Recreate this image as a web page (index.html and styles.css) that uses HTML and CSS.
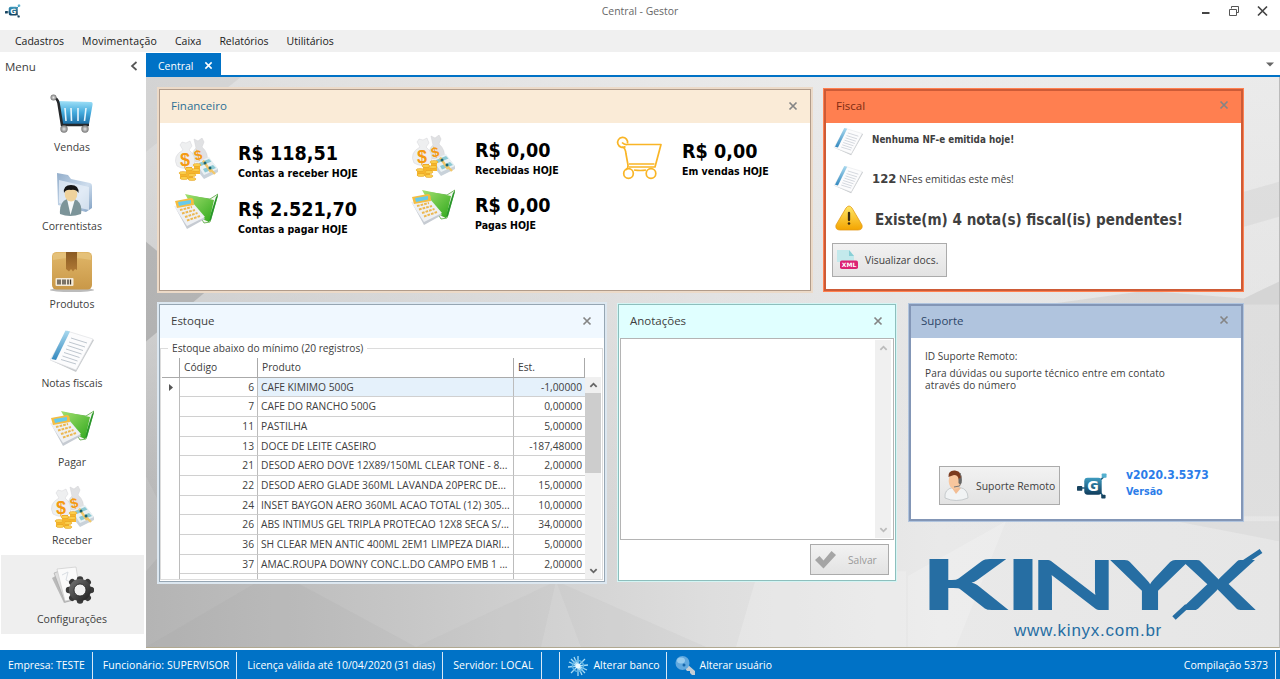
FILE: index.html
```html
<!DOCTYPE html>
<html lang="pt-BR">
<head>
<meta charset="utf-8">
<title>Central - Gestor</title>
<link rel="stylesheet" href="styles.css">
</head>
<body>
<svg class="defs" width="0" height="0">
  <defs>
    <linearGradient id="gBlue" x1="0" y1="0" x2="0" y2="1"><stop offset="0" stop-color="#9fe0f7"/><stop offset=".5" stop-color="#45abdd"/><stop offset="1" stop-color="#1c6ea6"/></linearGradient>
    <linearGradient id="gBox" x1="0" y1="0" x2="0" y2="1"><stop offset="0" stop-color="#e0b668"/><stop offset="1" stop-color="#c99848"/></linearGradient>
    <linearGradient id="gTape" x1="0" y1="0" x2="0" y2="1"><stop offset="0" stop-color="#8a5a22"/><stop offset="1" stop-color="#b07a35"/></linearGradient>
    <linearGradient id="gGreen" x1="0" y1="0" x2="1" y2="1"><stop offset="0" stop-color="#a4e070"/><stop offset="1" stop-color="#2fa81c"/></linearGradient>
    <linearGradient id="gFolder" x1="0" y1="0" x2="1" y2="1"><stop offset="0" stop-color="#93aecb"/><stop offset=".6" stop-color="#cfdeee"/><stop offset="1" stop-color="#7f9fc2"/></linearGradient>
    <linearGradient id="gWarn" x1="0" y1="0" x2="0" y2="1"><stop offset="0" stop-color="#ffe766"/><stop offset="1" stop-color="#f4a400"/></linearGradient>
    <linearGradient id="gGear" x1="0" y1="0" x2="1" y2="1"><stop offset="0" stop-color="#777"/><stop offset="1" stop-color="#1c1c1c"/></linearGradient>
    <linearGradient id="gLogo" x1="0" y1="0" x2="0" y2="1"><stop offset="0" stop-color="#3f9cc0"/><stop offset="1" stop-color="#0f3c5c"/></linearGradient>
    <radialGradient id="gBall"><stop offset="0" stop-color="#e8e8e8"/><stop offset="1" stop-color="#777"/></radialGradient>
    <linearGradient id="gSpine" x1="0" y1="0" x2="0" y2="1"><stop offset="0" stop-color="#a9d9ef"/><stop offset="1" stop-color="#3489bf"/></linearGradient>

    <symbol id="i-cart" viewBox="0 0 44 44">
      <path d="M8 8L41 9Q43 9 42.500 12L39 31H12Z" fill="url(#gBlue)"/>
      <path d="M15 15L16 28M21 15L21.500 28M28 15L28 28M36 15L34.500 28" stroke="#e6f6fd" stroke-width="1.600"/>
      <path d="M3 4.500Q7.500 5 8.500 10L12 32H39" fill="none" stroke="#26282b" stroke-width="2.600"/>
      <circle cx="3.500" cy="4.500" r="3" fill="url(#gBall)"/><circle cx="14" cy="36" r="3.700" fill="url(#gBall)"/><circle cx="35" cy="36" r="3.700" fill="url(#gBall)"/>
    </symbol>
    <symbol id="i-people" viewBox="0 0 44 44">
      <path d="M7 1L18 3 21 7 40 11Q42 11.500 42 14V36L36 40 8 33Z" fill="url(#gFolder)"/>
      <path d="M9 8L39 15V38L9 31Z" fill="#e7eff8" opacity=".75"/>
      <path d="M10 42Q9 30 17 27H24Q33 30 31 42Q20 46 10 42Z" fill="#7c9499"/>
      <path d="M17 27L20.500 43 25 27Z" fill="#f6f9fa"/>
      <ellipse cx="21" cy="22" rx="6.300" ry="7.500" fill="#efd29c"/>
      <path d="M14 21Q13 13 21 13T28.500 21Q26 17 21 18Q16 17 14 21Z" fill="#161616"/>
    </symbol>
    <symbol id="i-box" viewBox="0 0 44 44">
      <ellipse cx="22" cy="40" rx="22" ry="2" fill="#bcbcbc"/>
      <rect x="2" y="2" width="40" height="37.500" rx="4.500" fill="url(#gBox)"/>
      <path d="M3 10Q22 6 41 10V5Q40 3 37 3H7Q4 3 3 5Z" fill="#eac987" opacity=".6"/>
      <path d="M16 2H27V20L25 19 23 21.500 21 19 19 21.500 16 19Z" fill="url(#gTape)"/>
      <rect x="5.500" y="28" width="18" height="8" rx="1" fill="#f4ead8"/>
      <path d="M8 29.500V34.500M10 29.500V34.500M13 29.500V34.500M15 29.500V34.500M18 29.500V34.500M20.500 29.500V34.500" stroke="#3b342c" stroke-width="1.300"/>
    </symbol>
    <symbol id="i-note" viewBox="0 0 44 44">
      <path d="M0 31L26 43 44 11 42 10 26 39Z" fill="#c6c9cc"/>
      <path d="M17 2L43 10 26 41 0 31Z" fill="#fcfcfd" stroke="#dcdee0" stroke-width=".6"/>
      <path d="M15.500 1.500L20 2.500 6 31 1.500 30Z" fill="url(#gSpine)"/>
      <path d="M21 9L37 14M19 13L35 18M17.500 16.500L33 21.500M16 20L31.500 25M14 23.500L29.500 28.500M12.500 27L27.500 32M11 30.500L26 35" stroke="#b7bfc8" stroke-width=".9"/>
    </symbol>
    <symbol id="i-pay" viewBox="0 0 44 40">
      <path d="M14 3L36 6 44 1 36 29 30 30Z" fill="#f3f6ef" stroke="#53a43b" stroke-width=".8"/>
      <path d="M42 4L44 2 37 27 34 29Z" fill="#27962a"/>
      <path d="M11 1L40 7 35 29 24 24Z" fill="url(#gGreen)"/>
      <path d="M1 14L18 11 31 26 13 36Z" fill="#c6cbd2"/>
      <path d="M0 13L19 10 31 24 13 33Z" fill="#eef0f3"/>
      <path d="M1 8L17 5Q19 5 19.500 7L20 12 3 15Z" fill="#f4bd41"/>
      <path d="M4 9L17 7V10.500L5 13Z" fill="#67caea"/>
      <path d="M6 17L18 14M8 20.500L21 17M11 24L23.500 20M13 27.500L26 23" stroke="#ecb750" stroke-width="2" stroke-dasharray="2.700 1"/>
    </symbol>
    <symbol id="i-money" viewBox="0 0 44 44">
      <path d="M20 1L24 3 28 0 30 4 28 9Q35 15 33 24H18Q17 14 22 10Z" fill="#e0e1e3" stroke="#d0d1d4" stroke-width=".5"/>
      <path d="M8 4L12 5 16 3 18 8 15 12Q23 18 20 28Q11 33 3 28Q-2 18 9 12L6 7Z" fill="#eeeff0" stroke="#d4d5d8" stroke-width=".5"/>
      <text x="6" y="28" font-family="Liberation Sans" font-weight="bold" font-size="18" fill="#f59a13">$</text>
      <text x="20" y="22" font-family="Liberation Sans" font-weight="bold" font-size="14" fill="#f59a13" transform="rotate(-14 24 16)">$</text>
      <path d="M22 26L35 20 44 31 44 34 30 41 22 31Z" fill="#c9d2da"/>
      <path d="M22 25L35 19 44 31 30 37Z" fill="#eaf1f4"/>
      <path d="M25 25L35 21 37.500 23.500 27 28ZM29 31L39 27 42 30 31 34.500Z" fill="#8cc9d3"/>
      <path d="M29 22.500L37 34M35 30L41 36" stroke="#f2c76a" stroke-width="2.400"/>
      <circle cx="31" cy="25" r="1.500" fill="#1c6672"/><circle cx="36" cy="30" r="1.500" fill="#1c6672"/>
      <path d="M6 35H12V29H18V33H20V27H26V36H19V41H6Z" fill="#f6b62c"/>
      <g fill="#fbce4b" stroke="#e09a1c" stroke-width=".5"><ellipse cx="9" cy="35" rx="4" ry="1.600"/><ellipse cx="15" cy="31" rx="4" ry="1.600"/><ellipse cx="23" cy="27" rx="4" ry="1.600"/><ellipse cx="22" cy="32" rx="4" ry="1.600"/><ellipse cx="10" cy="40" rx="4" ry="1.600"/><ellipse cx="18" cy="41" rx="4" ry="1.600"/><ellipse cx="18" cy="37" rx="4" ry="1.600"/></g>
    </symbol>
    <symbol id="i-config" viewBox="0 0 44 44">
      <path d="M2 13L9 9 22 36 14 38Z" fill="#b9b9b9"/><path d="M4 8L12 5 24 34 15 37Z" fill="#dedede" stroke="#999" stroke-width=".5"/>
      <path d="M7 4L26 2 31 33 15 36Z" fill="#fafafa" stroke="#c4c4c4" stroke-width=".6"/>
      <path d="M12 10L18 7 16 15 22 18" stroke="#d8dde2" fill="none"/>
      <g transform="translate(30 25)">
        <g stroke="#3a3a3a" stroke-width="6.500" stroke-linecap="round"><path d="M-11 0H11M0 -10.500V10.500M-7.700 -7.700L7.700 7.700M-7.700 7.700L7.700 -7.700"/></g><circle r="11" fill="url(#gGear)"/>
        <circle r="6" fill="#f1f1f1" stroke="#222" stroke-width=".8"/>
      </g>
    </symbol>
    <symbol id="i-logo" viewBox="0 0 32 28">
      <path d="M3 16H9M24 8L29 3M24 20L27 25" stroke="#1f5d80" stroke-width="1.600"/>
      <rect x="0" y="14" width="5.500" height="5" rx="1" fill="#17435f"/>
      <rect x="25.500" y="1" width="5" height="4.500" rx=".8" fill="#54b0cf"/>
      <rect x="25" y="23" width="4.500" height="4" rx=".8" fill="#17435f"/>
      <rect x="7.500" y="5.500" width="18" height="17.500" rx="3.500" fill="url(#gLogo)"/>
      <text x="16.500" y="19.500" text-anchor="middle" font-family="DejaVu Sans" font-weight="bold" font-size="14.500" fill="#fff">G</text>
    </symbol>
    <symbol id="i-x" viewBox="0 0 10 10"><path d="M1.500 1.500L8.500 8.500M8.500 1.500L1.500 8.500" stroke="currentColor" stroke-width="1.700"/></symbol>
    <symbol id="i-up" viewBox="0 0 10 8"><path d="M1.500 6L5 2.500 8.500 6" fill="none" stroke="currentColor" stroke-width="2"/></symbol>
  </defs>
</svg>

<div class="app">
  <header class="titlebar">
    <svg class="app-icon" viewBox="0 0 32 28"><use href="#i-logo"/></svg>
    <span class="app-title">Central - Gestor</span>
    <div class="window-buttons">
      <svg width="10" height="12" viewBox="0 0 10 12"><path d="M1 8H8.500" stroke="#444" stroke-width="2"/></svg>
      <svg width="12" height="12" viewBox="0 0 12 12" fill="none" stroke="#555"><path d="M3.500 3.500V1.500H10.500V7.500H8.500"/><path d="M1.500 4.500H8.500V10.500H1.500Z"/></svg>
      <svg width="11" height="12" viewBox="0 0 11 12"><path d="M1 1.500L10 10.500M10 1.500L1 10.500" stroke="#444" stroke-width="1.700"/></svg>
    </div>
  </header>
  <nav class="menubar"><span>Cadastros</span><span class="wide">Movimentação</span><span>Caixa</span><span>Relatórios</span><span>Utilitários</span></nav>

  <div class="main">
    <aside class="sidebar">
      <div class="side-head"><span>Menu</span><svg width="8" height="10" viewBox="0 0 8 10"><path d="M6.500 1L2 5 6.500 9" fill="none" stroke="#555" stroke-width="1.700"/></svg></div>
      <div class="side-item"><svg><use href="#i-cart"/></svg><span>Vendas</span></div>
      <div class="side-item"><svg><use href="#i-people"/></svg><span>Correntistas</span></div>
      <div class="side-item"><svg><use href="#i-box"/></svg><span>Produtos</span></div>
      <div class="side-item"><svg><use href="#i-note"/></svg><span>Notas fiscais</span></div>
      <div class="side-item"><svg><use href="#i-pay"/></svg><span>Pagar</span></div>
      <div class="side-item"><svg><use href="#i-money"/></svg><span>Receber</span></div>
      <div class="side-item active"><svg><use href="#i-config"/></svg><span>Configurações</span></div>
    </aside>

    <section class="workspace">
      <div class="tabs">
        <div class="tab"><span>Central</span><svg class="x"><use href="#i-x"/></svg></div>
        <svg class="tab-menu" width="8" height="5" viewBox="0 0 8 5"><path d="M0 .5H8L4 4.500Z" fill="#666"/></svg>
      </div>
      <div class="canvas">
        <svg class="backdrop" viewBox="0 0 1133 571" preserveAspectRatio="none">
          <defs>
            <linearGradient id="bg" x1="0" y1="0" x2="1" y2="0"><stop offset="0" stop-color="#b4b4b4"/><stop offset=".2" stop-color="#c4c4c4"/><stop offset=".5" stop-color="#dedede"/><stop offset=".7" stop-color="#e9e9e9"/><stop offset="1" stop-color="#e6e6e6"/></linearGradient>
            <linearGradient id="bgTop" x1="0" y1="0" x2="0" y2="1"><stop offset="0" stop-color="#ececec"/><stop offset=".45" stop-color="#e4e4e4" stop-opacity=".7"/><stop offset=".8" stop-color="#e0e0e0" stop-opacity="0"/></linearGradient>
          </defs>
          <rect width="1133" height="571" fill="url(#bg)"/>
          <rect width="1133" height="571" fill="url(#bgTop)" opacity=".75"/>
          <path d="M0 0H95L0 75Z" fill="#c9c9c9" opacity=".5"/>
          <path d="M0 165L60 215 0 265Z" fill="#8a8a8a" opacity=".4"/>
          <path d="M0 400L30 460 0 495Z" fill="#d2d2d2" opacity=".25"/>
          <path d="M0 571L130 495 270 571Z" fill="#a0a0a0" opacity=".12"/>
          <path d="M270 571L410 505 395 571ZM410 505L435 571H560Z" fill="#b0b0b0" opacity=".12"/>
          <path d="M590 571L612 495 760 495V571Z" fill="#fff" opacity=".2"/>
          <path d="M1133 105L1098 115V150L1133 140Z" fill="#cfcfcf" opacity=".4"/>
          <path d="M900 228L1000 214 1098 222 1133 205V228Z" fill="#c6c6c6" opacity=".45"/>
          <path d="M1098 222L1133 205V440H1098Z" fill="#d0d0d0" opacity=".35"/>
          <path d="M762 500L860 445 810 571H762Z" fill="#fff" opacity=".2"/>
          <path d="M1030 445H1133V465Z" fill="#d6d6d6" opacity=".5"/>
        </svg>

        <div class="row">
          <article class="panel financeiro">
            <div class="panel-head"><span>Financeiro</span><svg class="x"><use href="#i-x"/></svg></div>
            <div class="metrics">
              <div class="metric-col c1">
                <div class="metric"><svg><use href="#i-money"/></svg><div><b>R$ 118,51</b><small>Contas a receber HOJE</small></div></div>
                <div class="metric pay"><svg><use href="#i-pay"/></svg><div><b>R$ 2.521,70</b><small>Contas a pagar HOJE</small></div></div>
              </div>
              <div class="metric-col c2">
                <div class="metric"><svg><use href="#i-money"/></svg><div><b>R$ 0,00</b><small>Recebidas HOJE</small></div></div>
                <div class="metric pay"><svg><use href="#i-pay"/></svg><div><b>R$ 0,00</b><small>Pagas HOJE</small></div></div>
              </div>
              <div class="metric-col c3">
                <div class="metric"><svg viewBox="0 0 46 44"><g fill="none" stroke="#f9b526" stroke-width="1.700" stroke-linejoin="round"><path d="M9.500 10.500A5 5 0 1 1 11.500 7.500"/><path d="M6 6.500Q8.500 9 11 8.500H45L39 31H13"/><path d="M6 11Q9.500 11.500 10 18L12 29Q12.500 32 9.500 34M13 28H38.500M18 34Q25 35 30 34"/><circle cx="12.500" cy="37.500" r="4.800"/><circle cx="35" cy="37.500" r="4.800"/></g></svg><div><b>R$ 0,00</b><small>Em vendas HOJE</small></div></div>
              </div>
            </div>
          </article>

          <article class="panel fiscal">
            <div class="panel-head"><span>Fiscal</span><svg class="x"><use href="#i-x"/></svg></div>
            <div class="fiscal-body">
              <div class="line l1"><svg class="note"><use href="#i-note"/></svg><b class="b1">Nenhuma NF-e emitida hoje!</b></div>
              <div class="line l2"><svg class="note"><use href="#i-note"/></svg><span><b class="b2">122</b> NFes emitidas este mês!</span></div>
              <div class="line l3"><svg class="warn" viewBox="0 0 28 26"><path d="M11 3Q14 -1 17 3L27 20Q28 25 23 25H5Q0 25 1 20Z" fill="url(#gWarn)" stroke="#e39a1a" stroke-width=".8"/><path d="M14 8V15" stroke="#3a2a10" stroke-width="2.300" stroke-linecap="round"/><circle cx="14" cy="18.500" r="1.300" fill="#3a2a10"/></svg><b class="b3">Existe(m) 4 nota(s) fiscal(is) pendentes!</b></div>
              <button class="btn docs"><svg width="21" height="20" viewBox="0 0 21 20"><path d="M0 0H12L17 6V12H0Z" fill="#c3e9ec"/><path d="M12 0V6H17Z" fill="#89cfd6"/><rect x="3" y="10.500" width="18" height="8.500" rx="1.800" fill="#dc2273"/><text x="12" y="17" text-anchor="middle" font-family="DejaVu Sans" font-weight="bold" font-size="6" fill="#fff">XML</text></svg><span>Visualizar docs.</span></button>
            </div>
          </article>
        </div>

        <div class="row second">
          <article class="panel estoque">
            <div class="panel-head"><span>Estoque</span><svg class="x"><use href="#i-x"/></svg></div>
            <fieldset>
              <legend>Estoque abaixo do mínimo (20 registros)</legend>
              <div class="grid">
                <div class="table">
                  <div class="tr th"><i></i><span>Código</span><span>Produto</span><span>Est.</span></div>
                  <div class="tr sel"><i><svg width="4" height="7" viewBox="0 0 4 7"><path d="M0 0L4 3.500 0 7Z" fill="#555"/></svg></i><span>6</span><span>CAFE KIMIMO 500G</span><span>-1,00000</span></div>
                  <div class="tr"><i></i><span>7</span><span>CAFE DO RANCHO 500G</span><span>0,00000</span></div>
                  <div class="tr"><i></i><span>11</span><span>PASTILHA</span><span>5,00000</span></div>
                  <div class="tr"><i></i><span>13</span><span>DOCE DE LEITE CASEIRO</span><span>-187,48000</span></div>
                  <div class="tr"><i></i><span>21</span><span>DESOD AERO DOVE 12X89/150ML CLEAR TONE - 8...</span><span>2,00000</span></div>
                  <div class="tr"><i></i><span>22</span><span>DESOD AERO GLADE 360ML LAVANDA 20PERC DE...</span><span>15,00000</span></div>
                  <div class="tr"><i></i><span>24</span><span>INSET BAYGON AERO 360ML ACAO TOTAL (12) 305...</span><span>10,00000</span></div>
                  <div class="tr"><i></i><span>26</span><span>ABS INTIMUS GEL TRIPLA PROTECAO 12X8 SECA S/...</span><span>34,00000</span></div>
                  <div class="tr"><i></i><span>36</span><span>SH CLEAR MEN ANTIC 400ML 2EM1 LIMPEZA DIARI...</span><span>5,00000</span></div>
                  <div class="tr"><i></i><span>37</span><span>AMAC.ROUPA DOWNY CONC.L.DO CAMPO EMB 1 ...</span><span>2,00000</span></div>
                  <div class="tr"><i></i><span></span><span></span><span></span></div>
                </div>
                <div class="scroll"><svg><use href="#i-up"/></svg><div class="thumb"></div><svg class="down"><use href="#i-up"/></svg></div>
              </div>
            </fieldset>
          </article>

          <article class="panel anotacoes">
            <div class="panel-head"><span>Anotações</span><svg class="x"><use href="#i-x"/></svg></div>
            <div class="memo"><div class="scroll off"><svg><use href="#i-up"/></svg><svg class="down"><use href="#i-up"/></svg></div></div>
            <button class="btn save"><svg width="21" height="18" viewBox="0 0 21 18"><path d="M0 9L4.500 5 8.500 9.500 16.500 0 21 4 8.500 17.500Z" fill="#a5a5a5"/></svg><span>Salvar</span></button>
          </article>

          <article class="panel suporte">
            <div class="panel-head"><span>Suporte</span><svg class="x"><use href="#i-x"/></svg></div>
            <div class="support-text"><p>ID Suporte Remoto:</p><p class="help">Para dúvidas ou suporte técnico entre em contato<br>através do número</p></div>
            <div class="support-foot">
              <button class="btn remote"><svg width="26" height="31" viewBox="0 0 26 31"><path d="M1 28Q0 19 9 17.500H16Q24 19 24 28Q12 33 1 28Z" fill="#f1f3f4" stroke="#b6bcbf" stroke-width=".7"/><path d="M8 18L12 24 17 18" fill="#f2bd94"/><ellipse cx="11" cy="11" rx="6.300" ry="8.500" fill="#f8c69d"/><path d="M4.500 7Q4 0 11 .5Q19 1 17 12L14.500 9Q14 5 10 5Q7 6 4.500 7Z" fill="#7b3b1f"/><path d="M16 3Q19 10 15.500 16L10 17" stroke="#777" stroke-width="1" fill="none"/><rect x="14.500" y="8" width="3" height="6" rx="1.500" fill="#666"/></svg><span>Suporte Remoto</span></button>
              <svg class="mark" viewBox="0 0 32 28"><use href="#i-logo"/></svg>
              <div class="version"><b>v2020.3.5373</b><small>Versão</small></div>
            </div>
          </article>
        </div>

        <div class="brand">
          <svg width="340" height="72" viewBox="0 0 340 72" fill="#266ea3" font-family="Lato" font-weight="700" font-size="69.500">
            <text x="-7" y="62" textLength="87" lengthAdjust="spacingAndGlyphs" font-weight="900">K</text>
            <text x="77" y="62" textLength="38" lengthAdjust="spacingAndGlyphs" font-weight="900">I</text>
            <text x="102" y="62" textLength="89" lengthAdjust="spacingAndGlyphs">N</text>
            <text x="184" y="62" textLength="78" lengthAdjust="spacingAndGlyphs">Y</text>
            <text x="253" y="62" textLength="76" lengthAdjust="spacingAndGlyphs">X</text>
            <path d="M247 70L260 58M313 17L334 3" stroke="#266ea3" stroke-width="5"/>
          </svg>
          <span>www.kinyx.com.br</span>
        </div>
      </div>
    </section>
  </div>

  <footer class="status">
    <span>Empresa: TESTE</span><span>Funcionário: SUPERVISOR</span><span>Licença válida até 10/04/2020 (31 dias)</span><span>Servidor: LOCAL</span><span class="gap"></span>
    <span class="action"><svg width="20" height="20" viewBox="0 0 20 20"><path d="M10 0V20M0 11L20 9M3 3L17 17M17 3L3 17M6 1L14 19M1 6L19 14" stroke="#a9dcf5" stroke-width="1.300"/><circle cx="10" cy="10" r="5.500" fill="none" stroke="#5fb4e4" stroke-width="1.400"/><circle cx="10" cy="10" r="2.500" fill="#e7f8ff"/></svg>Alterar banco</span>
    <span class="action user"><svg width="20" height="20" viewBox="0 0 20 20"><path d="M9 11L12 8 20 15V19H17L15 17V15H12Z" fill="#c3cdd5"/><circle cx="7.500" cy="7" r="7" fill="#61a9df"/><ellipse cx="6" cy="4.500" rx="4" ry="3" fill="#96cbee"/><circle cx="9" cy="9" r="1.500" fill="#1968ab"/></svg>Alterar usuário</span>
    <span class="build">Compilação 5373</span>
  </footer>
</div>
</body>
</html>
```
FILE: styles.css
```css
* { box-sizing: border-box; }
body { margin: 0; font: 10.5px "Open Sans", "Noto Sans", sans-serif; color: #404040; white-space: nowrap; overflow: hidden; }
svg { display: block; flex: none; }
p { margin: 0; }
.defs { position: absolute; }
.app { width: 1280px; height: 679px; display: flex; flex-direction: column; background: #fff; }

.titlebar { height: 30px; display: grid; grid-template-columns: 1fr auto 1fr; align-items: center; padding: 0 12px 8px 5px; font-size: 10.4px; color: #666; }
.app-icon { width: 16px; height: 14px; }
.window-buttons { display: flex; justify-content: flex-end; gap: 17px; }
.app-title { margin-left: 7px; }
.menubar { height: 22px; background: #f0f0f0; display: flex; align-items: center; padding-left: 15px; gap: 18px; color: #1a1a1a; }
.wide { letter-spacing: .2px; }

.main { flex: 1; display: flex; min-height: 0; }
.sidebar { width: 146px; padding-right: 2px; }
.side-head { height: 31px; display: flex; justify-content: space-between; align-items: center; padding: 0 6px 3px 5px; font-size: 11.5px; }
.side-item { height: 78.700px; margin-left: 1px; padding: 10px 1px 0 0; display: flex; flex-direction: column; align-items: center; gap: 3px; }
.side-item svg { width: 44px; height: 44px; }
.side-item span { line-height: 14px; }
.active { background: #efefef; }

.workspace { flex: 1; display: flex; flex-direction: column; min-width: 0; }
.tabs { height: 25px; border-bottom: 2px solid #0072c6; display: flex; justify-content: space-between; align-items: flex-end; padding-right: 6px; }
.tab { height: 22px; width: 75px; background: #0072c6; color: #fff; display: flex; align-items: center; gap: 11px; padding: 3px 0 0 12px; }
.x { width: 10px; height: 10px; color: #858585; }
.tab .x { width: 9px; height: 9px; color: #fff; }
.tab-menu { margin-bottom: 8px; }
.canvas { position: relative; height: 571px; padding: 12px 36px 0 13px; border-right: 1px solid #bbb; border-bottom: 1px solid #b0a890; isolation: isolate; }
.backdrop { position: absolute; inset: 0; width: 100%; height: 100%; z-index: -1; }

.row { display: flex; align-items: flex-start; }
.second { margin-top: 13px; height: 222px; }
.panel { background: #fff; border: 1px solid; }
.panel-head { height: 33px; display: flex; align-items: center; justify-content: space-between; padding: 0 12px 2px 11px; font-size: 11.5px; }
.financeiro { width: 652px; height: 202px; border-color: #b19c8b; box-shadow: 0 0 0 2px #ecdac8; }
.financeiro .panel-head { background: #faebd7; color: #2c7096; }
.fiscal { width: 419px; height: 202px; margin-left: 13px; border: 2px solid #cd5b37; box-shadow: 0 0 0 1px #ff8050; }
.fiscal .panel-head { background: #ff7f50; color: #7d2b12; height: 32px; padding: 0 12px 4px 10px; }
.estoque { width: 446px; height: 278px; border-color: #96a6b3; box-shadow: 0 0 0 2px #dce7f0; display: flex; flex-direction: column; }
.estoque .panel-head { background: #f0f8ff; flex: none; }
.anotacoes { width: 278px; height: 277px; margin-left: 13px; border-color: #8dbfbd; box-shadow: 0 0 0 1px #d4f5f4; }
.anotacoes .panel-head { background: #e0ffff; }
.suporte { width: 334px; height: 217px; margin-left: 13px; border: 2px solid #8396b6; box-shadow: 0 0 0 1px #b0c4de; }
.suporte .panel-head { background: #b0c4de; height: 32px; color: #2d4668; padding: 0 12px 4px 10px; }

.metrics { display: flex; padding-left: 14px; font-family: "DejaVu Sans Condensed", "DejaVu Sans", sans-serif; font-stretch: condensed; color: #000; }
.c1 { width: 237px; padding-top: 20px; }
.c2 { width: 205px; padding-top: 16.500px; }
.c3 { padding-top: 17.500px; }
.metric { height: 55.500px; display: flex; gap: 20px; }
.metric svg { width: 44px; height: 44px; margin-top: -5px; }
.pay svg { height: 40px; margin-top: -6px; }
.c3 .metric svg { width: 46px; }
.metric b { display: block; font-size: 19.600px; line-height: 22px; }
.metric small { display: block; font-size: 10.500px; line-height: 14px; margin-top: 1px; font-weight: bold; }

.fiscal-body { padding-left: 7px; }
.line { display: flex; align-items: center; }
.note { width: 31px; height: 29px; }
.l1 { height: 34px; gap: 8px; }
.l1 b { margin-top: -2px; }
.note { margin-top: 2px; }
.l2 { height: 41px; gap: 8px; font-size: 10.200px; margin-top: 1px; }
.l3 { height: 38px; gap: 12px; padding-left: 2px; }
.warn { width: 28px; height: 26px; }
.l3 b { margin-top: 3px; }
.line b { font-family: "DejaVu Sans Condensed", "DejaVu Sans", sans-serif; font-stretch: condensed; }
.b1 { font-size: 9.800px; }
.b2 { font-size: 13px; }
.b3 { font-size: 15.050px; }

.btn { font: inherit; color: #404040; border: 1px solid #ababab; background: linear-gradient(#f2f2f2, #e3e3e3); padding: 0; display: flex; align-items: center; }
.docs { width: 115px; height: 34px; margin: 6px 0 0 -1px; padding-left: 4px; gap: 7px; font-size: 10.300px; }
.save { width: 79px; height: 31px; margin: 4px 0 0 191px; padding-left: 4px; gap: 12px; color: #999; font-size: 10.200px; }
.remote { width: 121px; height: 39px; padding-left: 4px; gap: 6px; font-size: 10.400px; }

fieldset { flex: 1; min-height: 0; margin: 4px 1px 1px 0; padding: 0 1px; border: 1px solid #dcdcdc; min-width: 0; display: flex; flex-direction: column; }
legend { font-size: 10.200px; margin-left: 6px; padding: 0 4px; line-height: 13px; margin-bottom: 3px; }
.grid { display: flex; height: 221px; overflow: hidden; }
.table { flex: 1; font-size: 10.250px; }
.tr { display: grid; grid-template-columns: 18px 78px 256px 1fr; height: 19.670px; line-height: 19px; }
.tr > * { border-right: 1px solid #bcbcbc; border-bottom: 1px solid #d0d0d0; padding: 0 3px; overflow: hidden; }
.tr > :last-child { border-right: 0; }
.tr i { border-bottom: 0; display: flex; align-items: center; justify-content: center; }
.tr span:nth-child(2), .tr span:nth-child(4) { text-align: right; }
.th > * { border-color: #aaa; }
.th span:nth-child(n) { text-align: left; padding-left: 4px; }
.th > :last-child { border-right: 1px solid #aaa; }
.th i { border-bottom: 1px solid #aaa; }
.sel span:nth-child(n+3) { background: #e5f1fb; }
.scroll { width: 16px; margin-top: 19px; padding: 4px 0; background: #f0f0f0; display: flex; flex-direction: column; align-items: center; color: #666; }
.scroll svg { width: 9px; height: 8px; }
.thumb { width: 16px; height: 80px; margin-top: 4px; background: #cdcdcd; }
.scroll .down { margin-top: auto; transform: rotate(180deg); }
.memo { height: 202px; margin: 0 1px; border: 1px solid #b4b4b4; display: flex; justify-content: flex-end; padding: 1px 2px 1px 1px; }
.off { margin: 0; color: #bcbcbc; }

.support-text { height: 128px; padding: 12px 0 0 14px; font-size: 10.100px; line-height: 12px; }
.help { margin-top: 5px; letter-spacing: .1px; }
.support-foot { display: flex; padding-left: 28px; align-items: center; }
.mark { width: 31px; height: 28px; margin-left: 17px; }
.version { margin-left: 18px; margin-top: -5px; color: #2b7de9; font-family: "DejaVu Sans Condensed", "DejaVu Sans", sans-serif; font-stretch: condensed; }
.version b { display: block; font-size: 12px; line-height: 16px; }
.version small { display: block; font-weight: bold; font-size: 10.600px; line-height: 16px; }

.brand { margin: 22px 0 0 768px; width: 340px; color: #266ea3; }
.brand svg { overflow: visible; }
.brand span { display: block; margin: 2px 0 0 87px; font: 17px/18px "Liberation Sans", sans-serif; letter-spacing: .75px; }

.status { height: 29px; background: #0072c6; color: #fff; display: flex; padding: 2px 0 0; line-height: 27px; }
.status > span { border-right: 1px solid #d8e9f6; padding: 0 7px 0 10px; font-size: 10.500px; }
.status > span:first-child { padding-left: 8px; font-size: 10.400px; }
.status > span:nth-child(2) { letter-spacing: .07px; }
.status > span:nth-child(4) { letter-spacing: .1px; padding-right: 8px; }
.status > .gap { width: 18px; padding: 0; }
.status > .action { display: flex; align-items: center; gap: 5px; padding: 0 6px 0 8px; }
.status > .user { border: 0; font-size: 10.400px; }
.status > .build { margin-left: auto; margin-right: 4px; }
```
